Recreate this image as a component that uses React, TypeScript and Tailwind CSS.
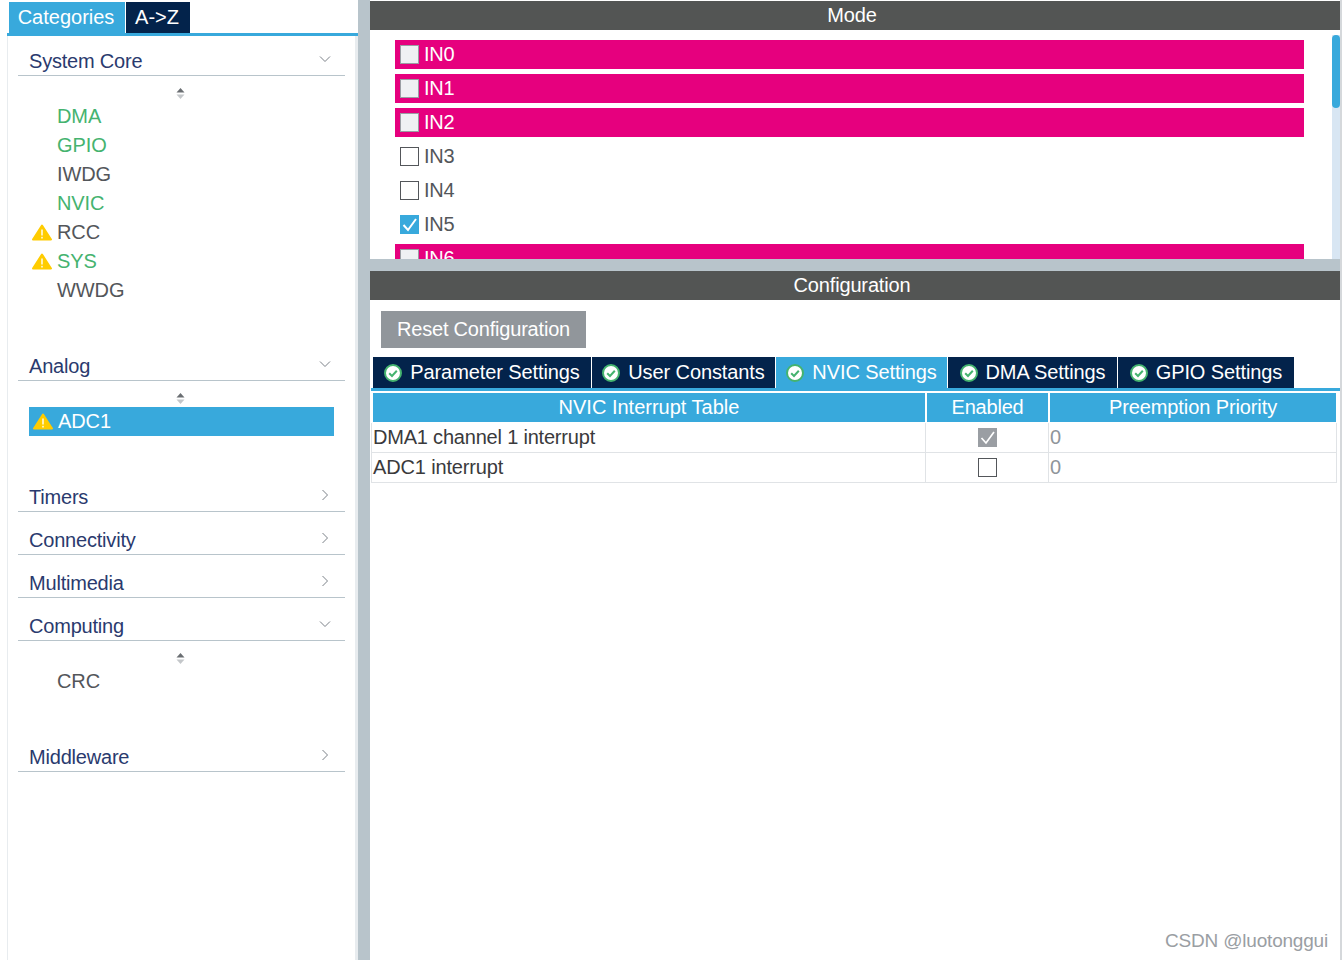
const font = "font-['Liberation_Sans',Arial,sans-serif]";

function Warning() {
  return (
    <svg width="20" height="17" viewBox="0 0 20 17" className="shrink-0">
      <path d="M10 1.5 L19 15.5 H1 Z" fill="#ffcc00" stroke="#ffcc00" strokeWidth="2" strokeLinejoin="round" />
      <rect x="9.3" y="5.5" width="1.4" height="6" fill="#ffffff" />
      <rect x="9.3" y="12.8" width="1.4" height="1.7" fill="#ffffff" />
    </svg>
  );
}

function Chevron({ open }: { open: boolean }) {
  return (
    <svg width="12" height="12" viewBox="0 0 12 12" className="mb-[4px]">
      <path d={open ? "M1 3.5 L6 8.5 L11 3.5" : "M3.5 1 L8.5 6 L3.5 11"} fill="none" stroke="#7b8188" strokeWidth="1" />
    </svg>
  );
}

function SortArrows() {
  return (
    <svg width="9" height="11" viewBox="0 0 9 11">
      <path d="M4.5 0 L8.5 4.5 H0.5 Z" fill="#6a6e72" />
      <path d="M4.5 11 L8.5 6.5 H0.5 Z" fill="#c4c7ca" />
    </svg>
  );
}

function Heading({ label, open, first }: { label: string; open: boolean; first?: boolean }) {
  return (
    <div
      className={`mx-[10px] flex h-[30px] items-center justify-between border-b border-[#b8c4cb] pl-[11px] pr-[14px] tracking-[-0.2px] text-[#2a3a6e] ${
        first ? "mt-[10px]" : "mt-[13px]"
      }`}
    >
      <span>{label}</span>
      <Chevron open={open} />
    </div>
  );
}

type Item = { name: string; green?: boolean; warn?: boolean; selected?: boolean };

function ItemList({ items }: { items: Item[] }) {
  return (
    <div className="pb-[33px]">
      <div className="flex h-[26px] justify-center pr-[2px] pt-[12px]">
        <SortArrows />
      </div>
      <div className="flex flex-col">
        {items.map((item) => (
          <div
            key={item.name}
            className={`mx-[21px] flex h-[29px] items-center tracking-[-0.1px] ${item.selected ? "bg-[#38a9dc] pl-[4px] text-white" : "pl-[3px]"} ${
              !item.selected && item.green ? "text-[#45b36f]" : ""
            } ${!item.selected && !item.green ? "text-[#53565a]" : ""}`}
          >
            <span className="flex w-[25px] shrink-0 items-center">{item.warn && <Warning />}</span>
            <span className="pb-[2px]">{item.name}</span>
          </div>
        ))}
      </div>
    </div>
  );
}

function Sidebar() {
  return (
    <aside className="flex h-full w-[358px] shrink-0 flex-col pl-[7px]">
      <div className="flex h-[36px] shrink-0 items-start border-b-[3px] border-[#38a9dc] pl-[2px] pt-[2px]">
        <div className="flex h-[31px] w-[116px] items-center justify-center bg-[#38a9dc] pb-[2px] pr-[2px] text-white">Categories</div>
        <div className="ml-px flex h-[31px] w-[64px] items-center justify-center bg-[#03234b] pb-[2px] pr-[2px] text-white">A-&gt;Z</div>
      </div>
      <div className="min-h-0 flex-1 border-l border-r-[3px] border-[#e8ecef] bg-white">
        <Heading label="System Core" open first />
        <ItemList
          items={[
            { name: "DMA", green: true },
            { name: "GPIO", green: true },
            { name: "IWDG" },
            { name: "NVIC", green: true },
            { name: "RCC", warn: true },
            { name: "SYS", green: true, warn: true },
            { name: "WWDG" },
          ]}
        />
        <Heading label="Analog" open />
        <ItemList items={[{ name: "ADC1", warn: true, selected: true }]} />
        <Heading label="Timers" open={false} />
        <Heading label="Connectivity" open={false} />
        <Heading label="Multimedia" open={false} />
        <Heading label="Computing" open />
        <ItemList items={[{ name: "CRC" }]} />
        <Heading label="Middleware" open={false} />
      </div>
    </aside>
  );
}

function PanelTitle({ children }: { children: string }) {
  return (
    <div className="flex h-[29px] shrink-0 items-center justify-center bg-[#535554] pb-[2px] pr-[6px] tracking-[-0.15px] text-white">
      {children}
    </div>
  );
}

function ModeCheck({ state }: { state: "reserved" | "empty" | "checked" }) {
  if (state === "checked") {
    return (
      <span className="flex h-[19px] w-[19px] shrink-0 items-center justify-center bg-[#38a9dc]">
        <svg width="17" height="17" viewBox="0 0 17 17">
          <path d="M2.5 9 L7 14 L15 3" fill="none" stroke="#ffffff" strokeWidth="2" />
        </svg>
      </span>
    );
  }
  return (
    <span
      className={`h-[19px] w-[19px] shrink-0 border ${
        state === "reserved" ? "border-[#9a9ea3] bg-[#eff1f3]" : "border-[#53565a] bg-white"
      }`}
    />
  );
}

const modeRows: { name: string; state: "reserved" | "empty" | "checked" }[] = [
  { name: "IN0", state: "reserved" },
  { name: "IN1", state: "reserved" },
  { name: "IN2", state: "reserved" },
  { name: "IN3", state: "empty" },
  { name: "IN4", state: "empty" },
  { name: "IN5", state: "checked" },
  { name: "IN6", state: "reserved" },
];

function ModePanel() {
  return (
    <section className="flex h-[259px] shrink-0 flex-col pt-px">
      <PanelTitle>Mode</PanelTitle>
      <div className="relative min-h-0 flex-1 overflow-hidden bg-white pl-[25px] pr-[36px] pt-[10px]">
        <div className="flex flex-col gap-[5px]">
          {modeRows.map((row) => (
            <div
              key={row.name}
              className={`flex h-[29px] shrink-0 items-center gap-[5px] pl-[5px] tracking-[-0.2px] ${
                row.state === "reserved" ? "bg-[#e6007e] text-white" : "text-[#53565a]"
              }`}
            >
              <ModeCheck state={row.state} />
              <span className="pb-[2px]">{row.name}</span>
            </div>
          ))}
        </div>
        {/* scrollbar */}
        <div className="absolute bottom-0 right-0 top-[5px] w-[8px] bg-[#d8e6f3]">
          <div className="h-[73px] w-full rounded-[4px] bg-[#38a9dc]" />
        </div>
      </div>
    </section>
  );
}

function TabIcon() {
  return (
    <svg width="18" height="18" viewBox="0 0 18 18" className="shrink-0">
      <circle cx="9" cy="9" r="8" fill="#ffffff" stroke="#45b36f" strokeWidth="2" />
      <path d="M5.2 9.2 L8 12 L12.8 6.8" fill="none" stroke="#45b36f" strokeWidth="2" />
    </svg>
  );
}

const tabs = [
  { label: "Parameter Settings", w: "w-[218px]" },
  { label: "User Constants", w: "w-[183px]" },
  { label: "NVIC Settings", w: "w-[171px]", active: true },
  { label: "DMA Settings", w: "w-[169px]" },
  { label: "GPIO Settings", w: "w-[176px]" },
];

function ConfigPanel() {
  return (
    <section className="flex min-h-0 flex-1 flex-col bg-white">
      <PanelTitle>Configuration</PanelTitle>
      <button className="ml-[11px] mt-[11px] flex h-[37px] w-[205px] shrink-0 items-center justify-center bg-[#91969b] pb-[2px] tracking-[-0.2px] text-white">
        Reset Configuration
      </button>
      <div className="ml-px mt-[9px] flex h-[34px] shrink-0 gap-px border-b-[3px] border-[#38a9dc] pl-[2px]">
        {tabs.map((tab) => (
          <div
            key={tab.label}
            className={`flex h-[31px] items-center justify-center gap-[8px] tracking-[-0.1px] text-white ${tab.w} ${
              tab.active ? "bg-[#38a9dc]" : "bg-[#03234b]"
            }`}
          >
            <TabIcon />
            <span className="pb-[2px]">{tab.label}</span>
          </div>
        ))}
      </div>
      <div className="ml-[3px] mr-[4px] mt-[2px] grid grid-cols-[552px_123px_1fr] text-[#3a3a3c]">
        <div className="flex h-[29px] items-center justify-center bg-[#38a9dc] pb-[2px] text-white">NVIC Interrupt Table</div>
        <div className="ml-[2px] flex h-[29px] items-center justify-center bg-[#38a9dc] pb-[2px] tracking-[-0.2px] text-white">Enabled</div>
        <div className="ml-[2px] flex h-[29px] items-center justify-center bg-[#38a9dc] pb-[2px] tracking-[-0.1px] text-white">Preemption Priority</div>

        <div className="-ml-[2px] mt-px flex h-[30px] items-center border-b border-l border-[#e0e3e6] pb-[2px] pl-px tracking-[-0.2px]">DMA1 channel 1 interrupt</div>
        <div className="mt-px flex h-[30px] items-center justify-center border-b border-l border-[#e0e3e6] pl-px">
          <span className="flex h-[19px] w-[19px] items-center justify-center bg-[#9a9ea3]">
            <svg width="17" height="17" viewBox="0 0 17 17">
              <path d="M2.5 9 L7 14 L15 3" fill="none" stroke="#ffffff" strokeWidth="1.7" />
            </svg>
          </span>
        </div>
        <div className="-mr-px mt-px flex h-[30px] items-center border-b border-l border-r border-[#e0e3e6] pb-[2px] pl-px text-[#8f959b]">0</div>

        <div className="-ml-[2px] flex h-[30px] items-center border-b border-l border-[#e0e3e6] pb-[2px] pl-px tracking-[-0.15px]">ADC1 interrupt</div>
        <div className="flex h-[30px] items-center justify-center border-b border-l border-[#e0e3e6] pl-px">
          <span className="h-[19px] w-[19px] border border-[#53565a] bg-white" />
        </div>
        <div className="-mr-px flex h-[30px] items-center border-b border-l border-r border-[#e0e3e6] pb-[2px] pl-px text-[#8f959b]">0</div>
      </div>
    </section>
  );
}

export default function App() {
  return (
    <div className={`relative flex h-[960px] w-[1342px] overflow-hidden bg-white text-[20px] leading-none ${font}`}>
      <Sidebar />
      <main className="flex h-full min-w-0 flex-1 flex-col border-l-[12px] border-r-[2px] border-[#b8c4cb] border-r-[#d5d8db]">
        <ModePanel />
        <div className="h-[12px] shrink-0 bg-[#b8c4cb]" />
        <ConfigPanel />
      </main>
      <span className="absolute bottom-[10px] right-[14px] text-[19px] tracking-[-0.2px] text-[#9a9ea3]">CSDN @luotonggui</span>
    </div>
  );
}
